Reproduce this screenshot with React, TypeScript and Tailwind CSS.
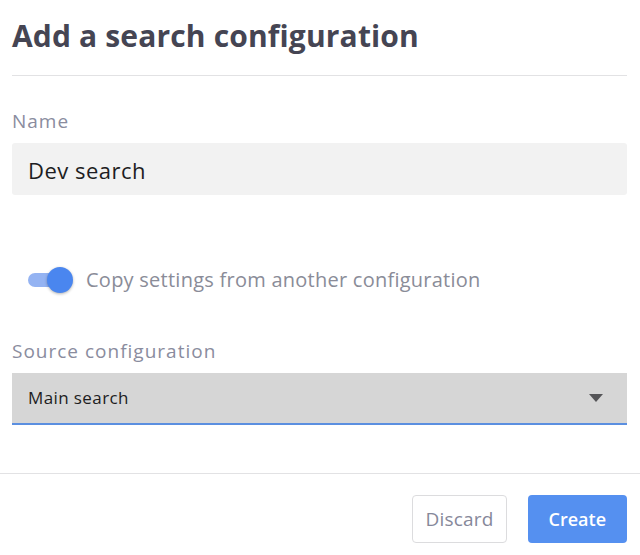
import { useState } from 'react';

const App = () => {
  const [copy, setCopy] = useState(true);

  return (
    <div className="w-[640px] h-[555px] bg-white font-['Open_Sans',sans-serif] overflow-hidden">
      <div className="pl-3 pr-[13px] pt-[16px]">
        <h1 className="text-[30px] leading-[40px] font-bold text-[#454553] tracking-[0.15px]">
          Add a search configuration
        </h1>
        <div className="mt-[19px] h-px bg-[#e2e2e4]" />

        <div className="mt-[33px]">
          <label className="block text-[19px] leading-[24px] font-medium tracking-[1px] text-[#8a8c9e]">Name</label>
          <div className="mt-[10px] h-[52px] rounded-[3px] bg-[#f2f2f2] flex items-center px-4">
            <span className="text-[22px] tracking-[0.5px] text-[#1d1d22] pt-[2px]">Dev search</span>
          </div>
        </div>

        <div className="mt-[70px] flex items-center pl-4 h-[30px]">
          <button
            type="button"
            onClick={() => setCopy(!copy)}
            className="relative w-[44px] h-[28px] flex items-center"
          >
            <span className={`block w-full h-[14px] rounded-full ${copy ? 'bg-[#94b3f2]' : 'bg-[#c8c8cc]'}`} />
            <span
              className={`absolute top-[1px] w-[26px] h-[26px] rounded-full shadow-[0_1px_3px_rgba(0,0,0,0.3)] ${copy ? 'left-[19px] bg-[#4a86ef]' : 'left-0 bg-white'}`}
            />
          </button>
          <span className="ml-[14px] text-[20px] tracking-[0.25px] text-[#8a8c98]">Copy settings from another configuration</span>
        </div>

        <div className="mt-[44px]">
          <label className="block text-[19px] leading-[24px] font-medium tracking-[1px] text-[#8a8c9e]">Source configuration</label>
          <div className="mt-[10px] h-[52px] bg-[#d6d6d6] border-b-2 border-[#5b8fe0] flex items-center justify-between pl-4 pr-[24px]">
            <span className="text-[17px] tracking-[0.4px] text-[#1d1d22]">Main search</span>
            <svg width="14" height="8" viewBox="0 0 14 8">
              <path d="M0 0 L14 0 L7 8 Z" fill="#555558" />
            </svg>
          </div>
        </div>
      </div>

      <div className="mt-[48px] h-px bg-[#e2e2e4]" />

      <div className="flex justify-end gap-[21px] pl-3 pr-[13px] pt-[21px]">
        <button
          type="button"
          className="h-[48px] px-3 rounded-[4px] border border-[#dcdcde] bg-white text-[19px] tracking-[0.2px] text-[#86889a]"
        >
          Discard
        </button>
        <button
          type="button"
          className="h-[48px] px-[21px] rounded-[4px] bg-[#5590f0] text-[18px] font-semibold text-white"
        >
          Create
        </button>
      </div>
    </div>
  );
};

export default App;
